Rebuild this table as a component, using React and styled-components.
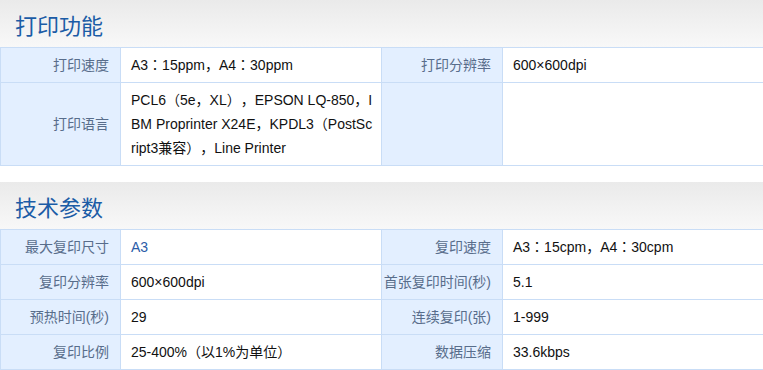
import React from "react";
import styled, { createGlobalStyle } from "styled-components";

const Global = createGlobalStyle`
  html, body { margin: 0; padding: 0; background: #fff; overflow: hidden; }
  body {
    font-family: Arial, "Liberation Sans", "Noto Sans CJK SC", sans-serif;
    text-spacing-trim: space-all;
  }
`;

const Page = styled.div`
  width: 780px;
  display: flex;
  flex-direction: column;
`;

const Section = styled.section`
  display: flex;
  flex-direction: column;
  & + & { margin-top: 16px; }
`;

const Title = styled.h2`
  margin: 0;
  height: 47px;
  padding-left: 15px;
  display: flex;
  align-items: center;
  font-size: 22px;
  font-weight: normal;
  color: #1b5ca6;
  background: linear-gradient(#eaeaea, #f8f8f8);
  font-family: "Liberation Sans", "Noto Sans CJK SC", sans-serif;
`;

const Grid = styled.div`
  display: grid;
  grid-template-columns: 120px 261px 121px 278px;
  border-top: 1px solid #c9ddf6;
  border-left: 1px solid #c9ddf6;
`;

const Cell = styled.div`
  box-sizing: border-box;
  border-right: 1px solid #c9ddf6;
  border-bottom: 1px solid #c9ddf6;
  min-height: 35px;
  display: flex;
  align-items: center;
  font-size: 14px;
  line-height: 24px;
  text-spacing-trim: space-all;
`;

const Label = styled(Cell)`
  background: #e3efff;
  color: #586d8b;
  justify-content: flex-end;
  padding-right: 11px;
  white-space: nowrap;
  font-family: "Liberation Sans", "Noto Sans CJK SC", sans-serif;
`;

const Value = styled(Cell)`
  color: #111;
  padding: 5px 6px 5px 10px;
  word-break: break-all;
  font-family: "Liberation Sans", "Noto Sans CJK JP", sans-serif;
`;

const Link = styled.span`
  color: #2a5ca8;
`;

const printRows = [
  ["打印速度", "A3：15ppm，A4：30ppm", "打印分辨率", "600×600dpi"],
  [
    "打印语言",
    "PCL6（5e，XL），EPSON LQ-850，IBM Proprinter X24E，KPDL3（PostScript3兼容），Line Printer",
    "",
    "",
  ],
];

const techRows = [
  ["最大复印尺寸", <Link>A3</Link>, "复印速度", "A3：15cpm，A4：30cpm"],
  ["复印分辨率", "600×600dpi", "首张复印时间(秒)", "5.1"],
  ["预热时间(秒)", "29", "连续复印(张)", "1-999"],
  ["复印比例", "25-400%（以1%为单位）", "数据压缩", "33.6kbps"],
];

function SpecTable({ title, rows }) {
  return (
    <Section>
      <Title>{title}</Title>
      <Grid>
        {rows.map((r, i) => (
          <React.Fragment key={i}>
            <Label>{r[0]}</Label>
            <Value>{r[1]}</Value>
            <Label>{r[2]}</Label>
            <Value>{r[3]}</Value>
          </React.Fragment>
        ))}
      </Grid>
    </Section>
  );
}

export default function App() {
  return (
    <Page>
      <Global />
      <SpecTable title="打印功能" rows={printRows} />
      <SpecTable title="技术参数" rows={techRows} />
    </Page>
  );
}
